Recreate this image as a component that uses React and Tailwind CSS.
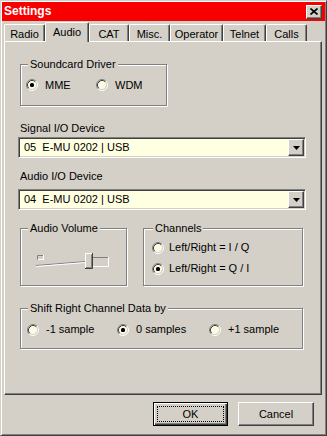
import React from "react"

const raised =
  "border border-t-white border-l-white border-r-[#404040] border-b-[#404040] shadow-[inset_-1px_-1px_#808080]"
const etched =
  "border border-[#808080] shadow-[1px_1px_0_#fff,inset_1px_1px_0_#fff]"

function Radio({ checked }) {
  return (
    <svg width="12" height="12" viewBox="0 0 12 12" className="shrink-0">
      <circle cx="6" cy="6" r="4.5" fill="#fbfbe4" />
      <path d="M2.11 9.89 A5.5 5.5 0 0 1 9.89 2.11" stroke="#808080" fill="none" />
      <path d="M9.89 2.11 A5.5 5.5 0 0 1 2.11 9.89" stroke="#ffffff" fill="none" />
      <path d="M2.82 9.18 A4.5 4.5 0 0 1 9.18 2.82" stroke="#404040" fill="none" />
      <path d="M9.18 2.82 A4.5 4.5 0 0 1 2.82 9.18" stroke="#d4d0c8" fill="none" />
      {checked && <rect x="4" y="4" width="4" height="4" rx="1.5" fill="#000" />}
    </svg>
  )
}

function RadioItem({ label, checked, gap = "gap-[7px]", className = "" }) {
  return (
    <div className={`flex items-center h-[13px] ${gap} ${className}`}>
      <Radio checked={checked} />
      <span>{label}</span>
    </div>
  )
}

function Group({ title, titleLeft = "left-[7px]", className = "", children }) {
  return (
    <div className={`relative ${etched} ${className}`}>
      <span className={`absolute -top-[7px] ${titleLeft} px-[2px] bg-[#d4d0c8] leading-[13px]`}>{title}</span>
      {children}
    </div>
  )
}

function Combo({ value, className = "" }) {
  return (
    <div
      className={`flex items-center h-[21px] w-[288px] bg-[#ffffe1] pr-[1px] border border-t-[#808080] border-l-[#808080] border-r-white border-b-white shadow-[inset_1px_1px_#404040,inset_-1px_-1px_#d4d0c8] ${className}`}
    >
      <span className="flex-1 pl-[5px] whitespace-pre">{value}</span>
      <div className={`w-[16px] h-[17px] bg-[#d4d0c8] flex items-center justify-center ${raised}`}>
        <svg width="7" height="4" viewBox="0 0 7 4">
          <path d="M0 0h7L3.5 4z" fill="#000" />
        </svg>
      </div>
    </div>
  )
}

const tabs = [
  { name: "Radio", w: "w-[41px]" },
  { name: "Audio", w: "w-[44px]", active: true },
  { name: "CAT", w: "w-[40px]" },
  { name: "Misc.", w: "w-[41px]" },
  { name: "Operator", w: "w-[53px]" },
  { name: "Telnet", w: "w-[43px]" },
  { name: "Calls", w: "w-[41px]" },
]

export default function App() {
  return (
    <div className="w-[327px] h-[436px] bg-[#d4d0c8] p-[1px] flex flex-col text-[11px] leading-[13px] text-black font-['Liberation_Sans',Arial,sans-serif] border border-t-[#d4d0c8] border-l-[#d4d0c8] border-r-[#404040] border-b-[#404040] shadow-[inset_1px_1px_#fff,inset_-1px_-1px_#808080]">
      {/* Title bar */}
      <div className="h-[19px] bg-[#f80000] flex items-center justify-between pl-[2px] pr-[3px] shrink-0">
        <span className="text-white font-bold text-[12px]">Settings</span>
        <div className={`w-[16px] h-[14px] bg-[#d4d0c8] flex items-center justify-center ${raised}`}>
          <svg width="8" height="7" viewBox="0 0 8 7">
            <path d="M0.5 0.5L7.5 6.5M7.5 0.5L0.5 6.5" stroke="#000" strokeWidth="1.6" />
          </svg>
        </div>
      </div>

      {/* Tabs */}
      <div className="flex items-end h-[19px] mt-[1px] pl-[2px] shrink-0">
        {tabs.map((t) =>
          t.active ? (
            <div
              key={t.name}
              className={`${t.w} relative z-10 h-[20px] -mb-[1px] bg-[#d4d0c8] flex items-start justify-center pt-[3px] rounded-t-[2px] border-t border-l border-r border-t-white border-l-white border-r-[#404040] shadow-[inset_-1px_0_#808080]`}
            >
              {t.name}
            </div>
          ) : (
            <div
              key={t.name}
              className={`${t.w} h-[17px] flex items-start justify-center pt-[3px] rounded-t-[2px] border-t border-l border-r border-t-white border-l-white border-r-[#404040] shadow-[inset_-1px_0_#808080]`}
            >
              {t.name}
            </div>
          )
        )}
      </div>

      {/* Panel */}
      <div className={`ml-[2px] w-[318px] h-[354px] shrink-0 flex flex-col items-start pl-[15px] ${raised}`}>
        <Group title="Soundcard Driver" className="mt-[22px] w-[147px] h-[42px] flex items-center pl-[5px]">
          <RadioItem label="MME" checked className="w-[70px]" />
          <RadioItem label="WDM" />
        </Group>

        <div className="mt-[16px]">Signal I/O Device</div>
        <Combo value="05  E-MU 0202 | USB" className="mt-[2px] -ml-[2px]" />

        <div className="mt-[12px]">Audio I/O Device</div>
        <Combo value="04  E-MU 0202 | USB" className="mt-[6px] -ml-[2px]" />

        <div className="flex mt-[18px]">
          <Group title="Audio Volume" className="w-[107px] h-[58px] pl-[15px] pt-[23px]">
            <svg width="74" height="17" viewBox="0 0 74 17">
              <path d="M1.5 3.5h6v4h-6z" fill="none" stroke="#808080" />
              <path d="M2 7.5h6M7.5 3v5" stroke="#fff" />
              <path d="M0 13.5L50 9.5" stroke="#808080" />
              <path d="M0 14.5L50 10.5" stroke="#fff" />
              <path d="M56 5.5H72.5" stroke="#808080" />
              <path d="M72.5 5V14.5H56" stroke="#fff" fill="none" />
              <rect x="49" y="1" width="8" height="15" fill="#d4d0c8" />
              <path d="M49.5 16V1.5H56.5" stroke="#fff" fill="none" />
              <path d="M56.5 1V16.5H49" stroke="#404040" fill="none" />
              <path d="M55.5 2.5V15.5H50" stroke="#808080" fill="none" />
            </svg>
          </Group>
          <Group title="Channels" titleLeft="left-[9px]" className="ml-[16px] w-[160px] h-[58px] flex flex-col gap-[8px] pl-[8px] pt-[12px]">
            <RadioItem label="Left/Right = I / Q" gap="gap-[5px]" />
            <RadioItem label="Left/Right = Q / I" gap="gap-[5px]" checked />
          </Group>
        </div>

        <Group title="Shift Right Channel Data by" className="mt-[22px] w-[283px] h-[41px] flex pl-[6px] pt-[14px]">
          <RadioItem label="-1 sample" className="w-[90px]" />
          <RadioItem label="0 samples" checked className="w-[92px]" />
          <RadioItem label="+1 sample" />
        </Group>
      </div>

      {/* Buttons */}
      <div className="flex justify-end gap-[10px] mt-[7px] mr-[11px]">
        <button className="w-[75px] h-[24px] bg-[#d4d0c8] p-[3px] flex border border-black shadow-[inset_1px_1px_#fff,inset_-1px_-1px_#404040,inset_-2px_-2px_#808080]">
          <span className="flex-1 flex items-center justify-center border border-dotted border-black">OK</span>
        </button>
        <button className={`w-[76px] h-[24px] bg-[#d4d0c8] flex items-center justify-center ${raised}`}>Cancel</button>
      </div>
    </div>
  )
}
